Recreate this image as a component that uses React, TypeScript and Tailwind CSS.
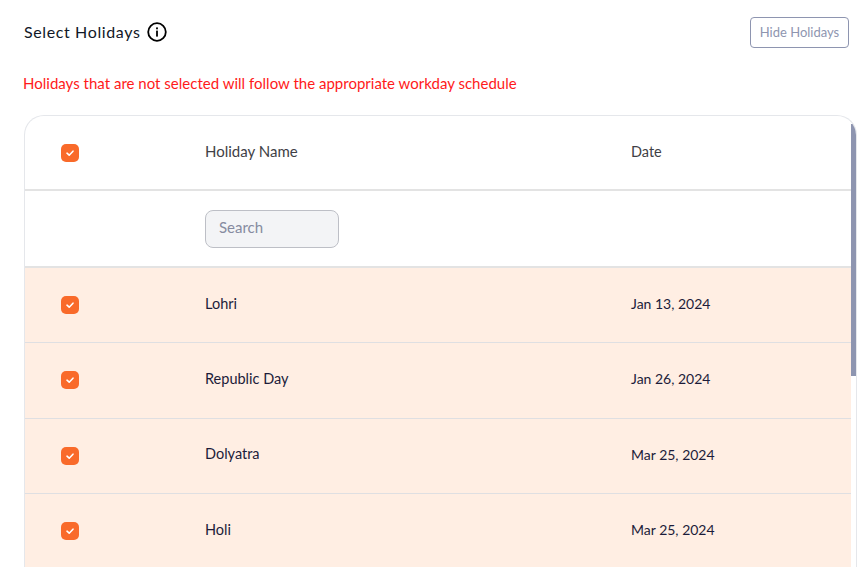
import React from "react";

const holidays = [
  { name: "Lohri", date: "Jan 13, 2024" },
  { name: "Republic Day", date: "Jan 26, 2024" },
  { name: "Dolyatra", date: "Mar 25, 2024" },
  { name: "Holi", date: "Mar 25, 2024" },
];

const Check = () => (
  <div className="w-[18px] h-[18px] rounded-[5px] bg-[#f96a2a] flex items-center justify-center">
    <svg width="12" height="12" viewBox="0 0 12 12" fill="none">
      <path d="M3 6.2L5.2 8.2L9 4.2" stroke="#ffffff" strokeWidth="1.6" strokeLinecap="round" strokeLinejoin="round" />
    </svg>
  </div>
);

const App = () => {
  return (
    <div className="w-[862px] h-[567px] overflow-hidden bg-white pl-6 pr-[5px] font-['Lato',sans-serif]">
      <div className="h-[67px] flex items-start justify-between pt-[17px] pr-2">
        <div className="flex items-center h-[30px]">
          <div className="text-[16px] tracking-[0.62px] text-[#111827]">Select Holidays</div>
          <svg className="ml-[7px]" width="20" height="20" viewBox="0 0 20 20" fill="none">
            <circle cx="10" cy="10" r="8.8" stroke="#000000" strokeWidth="1.8" />
            <rect x="9.1" y="8.6" width="1.8" height="6" fill="#000000" />
            <rect x="9.1" y="5.4" width="1.8" height="1.9" fill="#000000" />
          </svg>
        </div>
        <button className="w-[99px] h-[31px] rounded-[4px] border border-[#8e95b0] text-[13px] text-[#8e95b0] bg-white">
          Hide Holidays
        </button>
      </div>
      <div className="h-[48px] pt-[6px] -ml-px text-[15px] leading-5 tracking-[0.01px] text-[#ff1a1a]">
        Holidays that are not selected will follow the appropriate workday schedule
      </div>
      <div className="relative h-[452px] overflow-hidden rounded-t-[20px] border-t border-x border-[#e5e7eb] pr-[5px]">
        <div className="h-[75px] flex items-center border-b-2 border-[#e3e3e3] text-[#3f3f46]">
          <div className="w-[180px] pl-[36px]"><Check /></div>
          <div className="w-[426px] -mt-[2px] text-[15px]">Holiday Name</div>
          <div className="-mt-[2px] text-[14.5px]">Date</div>
        </div>
        <div className="h-[77px] flex items-center border-b-2 border-[#e3e3e3]">
          <div className="w-[180px]" />
          <input
            placeholder="Search"
            className="w-[134px] h-[38px] rounded-[8px] border border-[#bdbfc6] bg-[#f3f4f6] px-[13px] pb-[4px] text-[15px] placeholder:text-[#868ba0]"
          />
        </div>
        {holidays.map((h) => (
          <div key={h.name} className="h-[75.3px] flex items-center border-b border-[#dfdfe2] bg-[#ffeee3] text-[#1c1c3a]">
            <div className="w-[180px] pl-[36px]"><Check /></div>
            <div className="w-[426px] -mt-[3px] text-[14.5px]">{h.name}</div>
            <div className="-mt-[3px] text-[14px]">{h.date}</div>
          </div>
        ))}
        <div className="absolute top-[8px] right-0 w-[5px] h-[252px] bg-[#8e95b0]" />
      </div>
    </div>
  );
};

export default App;
